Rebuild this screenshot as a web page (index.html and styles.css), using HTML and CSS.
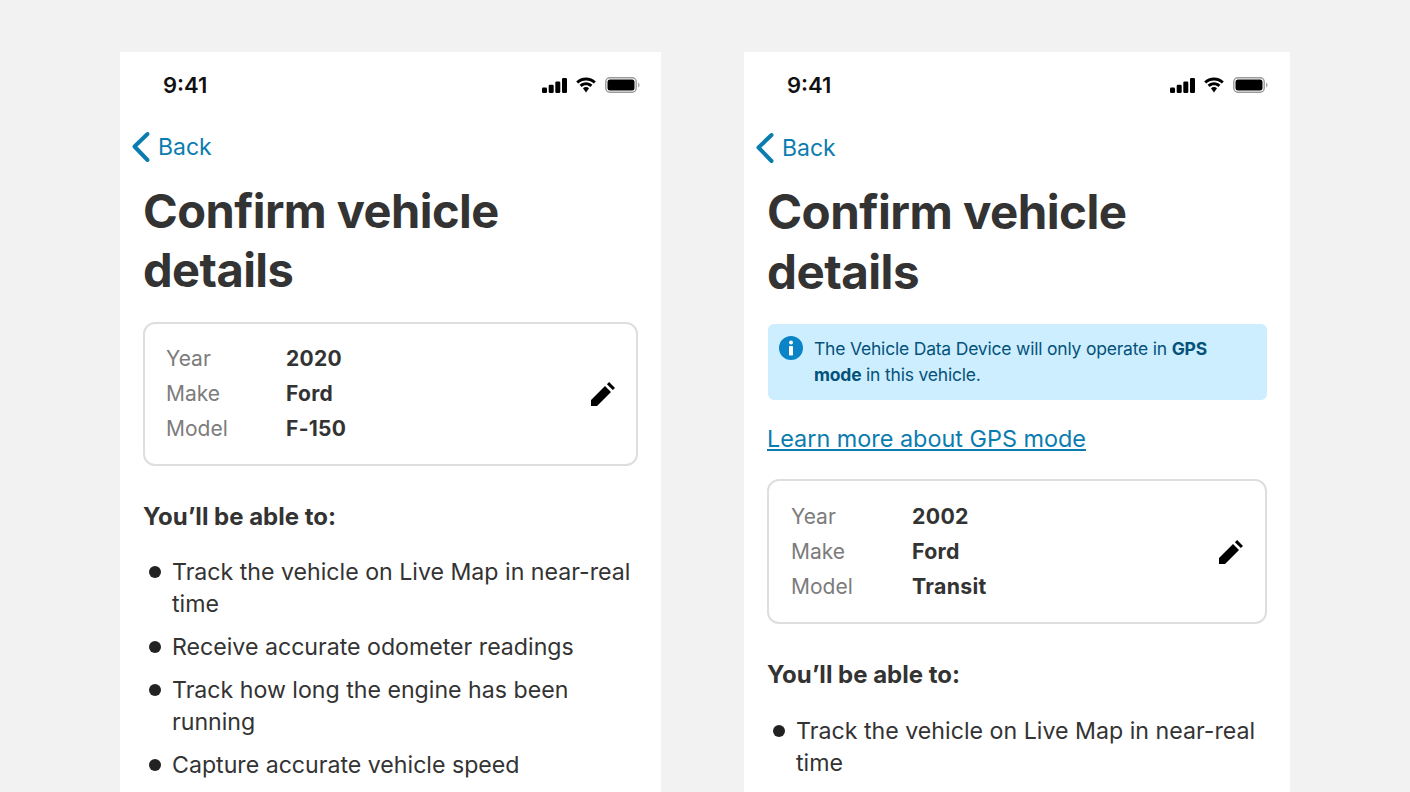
FILE: index.html
```html
<!DOCTYPE html>
<html lang="en">
<head>
<meta charset="utf-8">
<title>Confirm vehicle details</title>
<link rel="stylesheet" href="styles.css">
</head>
<body>
<main class="stage">
  <section class="phone phone-a">
    <div class="status">
      <span class="time">9:41</span>
      <span class="status-icons">
        <svg class="sig" viewBox="0 0 25 15"><rect x="0" y="9.500" width="5" height="5.500" rx="1.300"/><rect x="6.700" y="6.800" width="5" height="8.200" rx="1.300"/><rect x="13.300" y="3.500" width="5" height="11.500" rx="1.300"/><rect x="20" y="0" width="5" height="15" rx="1.300"/></svg>
        <svg class="wifi" viewBox="0 0 22 16"><path d="M11 3.400c3 0 5.700 1.200 7.800 3.100l2-2.100C18.200 1.900 14.800.4 11 .4S3.800 1.900 1.200 4.400l2 2.100C5.300 4.600 8 3.400 11 3.400z"/><path d="M11 8.200c1.700 0 3.200.6 4.400 1.700l2-2.100C15.700 6.200 13.500 5.200 11 5.200S6.300 6.200 4.600 7.800l2 2.100C7.800 8.800 9.300 8.200 11 8.200z"/><path d="M11 10.100c-1.200 0-2.200.4-3 1.200L11 15.500l3-4.200c-.8-.8-1.800-1.200-3-1.200z"/></svg>
        <svg class="batt" viewBox="0 0 35 16"><rect x=".8" y=".8" width="30.400" height="14.400" rx="4" fill="none" stroke="#9a9a9a" stroke-width="1.400"/><rect x="2.500" y="2.500" width="27" height="11" rx="2.500"/><path d="M33 5.500c1 .4 1.600 1.300 1.600 2.500s-.6 2.100-1.600 2.500z" fill="#aaa"/></svg>
      </span>
    </div>
    <a class="back"><svg class="chev" viewBox="0 0 20 32"><path d="M16.500 3 3.500 15.500 16.500 29" fill="none" stroke="currentColor" stroke-width="4" stroke-linecap="round" stroke-linejoin="round"/></svg>Back</a>
    <h1>Confirm vehicle details</h1>
    <div class="card">
      <dl class="specs">
        <dt>Year</dt><dd>2020</dd>
        <dt>Make</dt><dd>Ford</dd>
        <dt>Model</dt><dd>F-150</dd>
      </dl>
      <svg class="edit" viewBox="0 0 24 24"><path d="M0 24v-6L14 4l6 6L6 24zM15.900 2.200 18.100 0 24 5.900l-2.200 2.200z"/></svg>
    </div>
    <h2>You’ll be able to:</h2>
    <ul class="list">
      <li>Track the vehicle on Live Map in near-real time</li>
      <li>Receive accurate odometer readings</li>
      <li>Track how long the engine has been running</li>
      <li>Capture accurate vehicle speed</li>
    </ul>
  </section>
  <section class="phone phone-b">
    <div class="status">
      <span class="time">9:41</span>
      <span class="status-icons">
        <svg class="sig" viewBox="0 0 25 15"><rect x="0" y="9.500" width="5" height="5.500" rx="1.300"/><rect x="6.700" y="6.800" width="5" height="8.200" rx="1.300"/><rect x="13.300" y="3.500" width="5" height="11.500" rx="1.300"/><rect x="20" y="0" width="5" height="15" rx="1.300"/></svg>
        <svg class="wifi" viewBox="0 0 22 16"><path d="M11 3.400c3 0 5.700 1.200 7.800 3.100l2-2.100C18.200 1.900 14.800.4 11 .4S3.800 1.900 1.200 4.400l2 2.100C5.300 4.600 8 3.400 11 3.400z"/><path d="M11 8.200c1.700 0 3.200.6 4.400 1.700l2-2.100C15.700 6.200 13.500 5.200 11 5.200S6.300 6.200 4.600 7.800l2 2.100C7.800 8.800 9.300 8.200 11 8.200z"/><path d="M11 10.100c-1.200 0-2.200.4-3 1.200L11 15.500l3-4.200c-.8-.8-1.800-1.200-3-1.200z"/></svg>
        <svg class="batt" viewBox="0 0 35 16"><rect x=".8" y=".8" width="30.400" height="14.400" rx="4" fill="none" stroke="#9a9a9a" stroke-width="1.400"/><rect x="2.500" y="2.500" width="27" height="11" rx="2.500"/><path d="M33 5.500c1 .4 1.600 1.300 1.600 2.500s-.6 2.100-1.600 2.500z" fill="#aaa"/></svg>
      </span>
    </div>
    <a class="back"><svg class="chev" viewBox="0 0 20 32"><path d="M16.500 3 3.500 15.500 16.500 29" fill="none" stroke="currentColor" stroke-width="4" stroke-linecap="round" stroke-linejoin="round"/></svg>Back</a>
    <h1>Confirm vehicle details</h1>
    <div class="notice">
      <svg class="info" viewBox="0 0 24 24"><circle cx="12" cy="12" r="12" fill="#0a84c6"/><circle cx="12" cy="6.500" r="2" fill="#fff"/><rect x="10" y="10" width="4" height="9.500" rx=".8" fill="#fff"/></svg>
      <p>The Vehicle Data Device will only operate in <b>GPS</b> <b>mode</b> in this vehicle.</p>
    </div>
    <a class="learn">Learn more about GPS mode</a>
    <div class="card">
      <dl class="specs">
        <dt>Year</dt><dd>2002</dd>
        <dt>Make</dt><dd>Ford</dd>
        <dt>Model</dt><dd>Transit</dd>
      </dl>
      <svg class="edit" viewBox="0 0 24 24"><path d="M0 24v-6L14 4l6 6L6 24zM15.900 2.200 18.100 0 24 5.900l-2.200 2.200z"/></svg>
    </div>
    <h2>You’ll be able to:</h2>
    <ul class="list">
      <li>Track the vehicle on Live Map in near-real time</li>
    </ul>
  </section>
</main>
</body>
</html>
```
FILE: styles.css
```css
* { box-sizing: border-box; }
html, body { margin: 0; height: 100%; overflow: hidden; background: #f2f2f2; }
body { font-family: Inter, "Liberation Sans", sans-serif; color: #333; }
.stage { display: flex; padding: 52px 0 0 120px; gap: 83px; height: 792px; }
.phone { background: #fff; height: 740px; overflow: hidden; flex: none; padding: 0 23px; }
.phone-a { width: 541px; }
.phone-b { width: 546px; }
.status { height: 68px; display: flex; align-items: center; justify-content: space-between; padding: 0 0 2px 20px; margin-right: -2px; }
.phone-b .status { margin-right: -1px; }
.time { font-size: 22px; font-weight: 600; color: #111; }
.status-icons { display: flex; align-items: center; gap: 8px; }
.status-icons svg { display: block; fill: #000; }
.sig { width: 25px; height: 15px; }
.wifi { width: 22px; height: 16px; }
.batt { width: 35px; height: 16px; }
.back { display: flex; align-items: center; gap: 7px; margin-left: -12px; height: 30px; color: #0b7cb0; font-size: 23px; margin-top: 12px; }
.phone-b .back { margin-top: 13px; }
.chev { width: 20px; height: 32px; }
h1 { margin: 19px 0 0; font-size: 47px; line-height: 59px; font-weight: 700; letter-spacing: -.55px; color: #333; }
.phone-b h1 { font-size: 47.500px; line-height: 60px; }
.card { display: flex; align-items: center; justify-content: space-between; border: 2px solid #dedede; border-radius: 12px; margin-top: 23px; padding: 18.400px 21px 17.600px 21px; }
.specs { display: grid; grid-template-columns: 120px auto; margin: 0; font-size: 21px; line-height: 34.700px; }
.specs dt { color: #7c7c7c; }
.specs dd { margin: 0; font-weight: 700; letter-spacing: .3px; }
.phone-b .specs { grid-template-columns: 121px auto; line-height: 35px; }
.phone-b .specs dd { font-size: 21.300px; }
.phone-b .card { margin-top: 24px; padding: 18px 22px; }
.edit { width: 24px; height: 24px; fill: #000; display: block; }
h2 { margin: 34px 0 0; font-size: 24px; line-height: 34px; font-weight: 700; }
.list { list-style: none; margin: 22px 0 0; padding: 0 0 0 29px; font-size: 23.150px; line-height: 32px; }
.phone-b .list { margin-top: 23px; font-size: 23.200px; }
.list li { position: relative; margin-bottom: 11px; }
.list li::before { content: ""; position: absolute; left: -23.500px; top: 10px; width: 12px; height: 12px; border-radius: 50%; background: #222; }
.notice { display: flex; gap: 11px; background: #cdeeff; border-radius: 6px; margin: 22px 0 0 1px; padding: 12px 11px; color: #04527a; font-size: 17.500px; letter-spacing: -.2px; line-height: 26px; }
.notice p { margin: 0; width: 420px; }
.info { width: 24px; height: 24px; flex: none; }
.learn { display: block; margin-top: 23px; color: #0b7cb0; font-size: 23.400px; line-height: 32px; text-decoration: underline; }
```
